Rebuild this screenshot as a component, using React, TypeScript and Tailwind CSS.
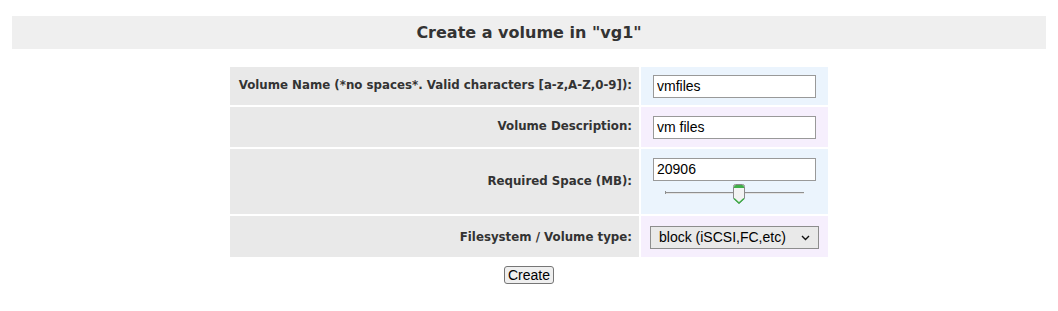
const labelCell =
  'flex items-center justify-end bg-[#e9e9e9] pr-[7px] text-[11.8px] font-bold text-[#333] [font-family:"DejaVu_Sans",Verdana,sans-serif]'

const fieldFont = '[font-family:"Liberation_Sans",Arial,sans-serif] text-[14px]'

function RangeSlider() {
  return (
    <svg width="142" height="22" viewBox="0 0 142 22" className="mt-[3px] ml-[12px] block">
      <rect x="0" y="8" width="139" height="1" fill="#8f8f8f" />
      <rect x="0" y="9" width="139" height="1" fill="#e2e2e2" />
      <rect x="0" y="7" width="1" height="3" fill="#8f8f8f" />
      <path
        d="M68.5 2.5 Q68.5 0.5 70.5 0.5 H77.5 Q79.5 0.5 79.5 2.5 V14.5 L74 19.5 L68.5 14.5 Z"
        fill="#f3f3f3"
        stroke="#8a8a8a"
      />
      <path d="M69 3 Q69 1 71 1 H77 Q79 1 79 3 V4 H69 Z" fill="#3fae49" />
      <path d="M69 14.5 L74 19 L79 14.5" fill="none" stroke="#3fae49" strokeWidth="1.5" />
    </svg>
  )
}

export default function App() {
  return (
    <div className="min-h-[311px] w-[1058px] bg-white pt-[16px] [font-family:'DejaVu_Sans',Verdana,sans-serif]">
      <div className="mx-[12px] flex h-[33px] items-center justify-center bg-[#efefef]">
        <h2 className="text-[16px] font-bold text-[#333]">Create a volume in "vg1"</h2>
      </div>

      <div className="mx-auto mt-[18px] grid w-[598px] grid-cols-[409px_187px] gap-[2px]">
        <div className={`${labelCell} h-[38px]`}>
          Volume Name (*no spaces*. Valid characters [a-z,A-Z,0-9]):
        </div>
        <div className="flex h-[38px] items-center bg-[#ebf4fd] pl-[12px]">
          <input
            className={`${fieldFont} h-[23px] w-[163px] border border-[#999] bg-white px-[3px] text-black outline-none`}
            defaultValue="vmfiles"
          />
        </div>

        <div className={`${labelCell} h-[40px]`}>Volume Description:</div>
        <div className="flex h-[40px] items-center bg-[#f6effd] pl-[12px]">
          <input
            className={`${fieldFont} h-[23px] w-[163px] border border-[#999] bg-white px-[3px] text-black outline-none`}
            defaultValue="vm files"
          />
        </div>

        <div className={`${labelCell} h-[65px]`}>Required Space (MB):</div>
        <div className="flex h-[65px] flex-col justify-center bg-[#ebf4fd] pl-[12px]">
          <input
            className={`${fieldFont} h-[23px] w-[163px] border border-[#999] bg-white px-[3px] text-black outline-none`}
            defaultValue="20906"
          />
          <RangeSlider />
        </div>

        <div className={`${labelCell} h-[41px] pt-[2px]`}>Filesystem / Volume type:</div>
        <div className="flex h-[41px] items-center bg-[#f6effd] pl-[9px] pt-[2px]">
          <div
            className={`${fieldFont} flex h-[23px] w-[169px] items-center justify-between border border-[#8d8d8d] bg-[#e9e9e9] pl-[8px] pr-[8px] text-black`}
          >
            <span>block (iSCSI,FC,etc)</span>
            <svg width="9" height="6" viewBox="0 0 9 6">
              <path d="M1 1 L4.5 4.5 L8 1" fill="none" stroke="#111" strokeWidth="1.4" />
            </svg>
          </div>
        </div>
      </div>

      <div className="mt-[9px] flex justify-center">
        <button
          type="button"
          className={`${fieldFont} h-[18px] w-[50px] rounded-[3px] border border-[#767676] bg-[#efefef] leading-none text-black`}
        >
          Create
        </button>
      </div>
    </div>
  )
}
